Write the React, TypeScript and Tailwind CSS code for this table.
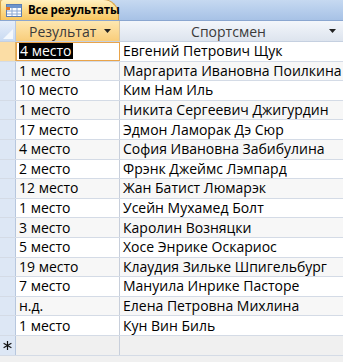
import React from "react";

const rows: [string, string][] = [
  ["4 место", "Евгений Петрович Щук"],
  ["1 место", "Маргарита Ивановна Поилкина"],
  ["10 место", "Ким Нам Иль"],
  ["1 место", "Никита Сергеевич Джигурдин"],
  ["17 место", "Эдмон Ламорак Дэ Сюр"],
  ["4 место", "София Ивановна Забибулина"],
  ["2 место", "Фрэнк Джеймс Лэмпард"],
  ["12 место", "Жан Батист Люмарэк"],
  ["1 место", "Усейн Мухамед Болт"],
  ["3 место", "Каролин Возняцки"],
  ["5 место", "Хосе Энрике Оскариос"],
  ["19 место", "Клаудия Зильке Шпигельбург"],
  ["7 место", "Мануила Инрике Пасторе"],
  ["н.д.", "Елена Петровна Михлина"],
  ["1 место", "Кун Вин Биль"],
];

function TableIcon() {
  return (
    <svg width="16" height="13" viewBox="0 0 16 13" className="shrink-0">
      <rect x="0.5" y="0.5" width="15" height="12" fill="#ffffff" stroke="#5b7fb5" />
      <rect x="1" y="1" width="14" height="3" fill="#6f95cc" />
      <line x1="1" y1="7" x2="15" y2="7" stroke="#8aa7d3" />
      <line x1="1" y1="10" x2="15" y2="10" stroke="#8aa7d3" />
      <line x1="6" y1="4" x2="6" y2="12" stroke="#8aa7d3" />
      <line x1="11" y1="4" x2="11" y2="12" stroke="#8aa7d3" />
      <rect x="0" y="3" width="4" height="3" fill="#e0782a" />
    </svg>
  );
}

function Arrow() {
  return (
    <svg width="7" height="4" viewBox="0 0 7 4" className="shrink-0">
      <path d="M0 0 H7 L3.5 4 Z" fill="#222" />
    </svg>
  );
}

function Star() {
  return (
    <svg width="9" height="9" viewBox="0 0 9 9">
      <g stroke="#111" strokeWidth="1.2">
        <line x1="4.5" y1="0" x2="4.5" y2="9" />
        <line x1="0.6" y1="2.25" x2="8.4" y2="6.75" />
        <line x1="0.6" y1="6.75" x2="8.4" y2="2.25" />
      </g>
    </svg>
  );
}

export default function App() {
  const font = { fontFamily: '"Open Sans", "Noto Sans", sans-serif' };
  return (
    <div className="w-[343px] h-[362px] overflow-hidden bg-[#f0f0f0] text-[14px] text-black" style={font}>
      {/* tab strip */}
      <div className="h-[21px] bg-gradient-to-b from-[#c6d9f1] to-[#a7c2e6] border-b border-[#8aa6d0] flex items-end">
        <div className="h-[21px] w-[119px] shrink-0 rounded-tl-[3px] rounded-tr-[16px] bg-gradient-to-b from-[#fff0c0] via-[#fcdc8c] to-[#f8c55e] border border-b-0 border-[#d9a44a] flex items-center pl-[5px] gap-[6px]">
          <TableIcon />
          <span className="font-bold text-[11.5px] leading-none whitespace-nowrap tracking-[-0.2px]">Все результаты</span>
        </div>
      </div>
      {/* header */}
      <div className="flex h-[21px] border-b border-[#c5d0e0]">
        <div className="w-[16px] bg-gradient-to-b from-[#e6eefa] to-[#c9daf2] border-r border-[#b7c7de] relative">
          <div className="absolute right-[2px] bottom-[2px] w-0 h-0 border-l-[10px] border-l-transparent border-b-[10px] border-b-[#f4f8fd]" />
        </div>
        <div className="w-[104px] bg-gradient-to-b from-[#fde7b0] to-[#f9cd7a] border-r border-[#d5c3a0] flex items-center pl-[13px] pr-[8px] justify-between">
          <span className="text-[#3a3a3a]">Результат</span>
          <Arrow />
        </div>
        <div className="flex-1 bg-gradient-to-b from-[#f3f6fb] to-[#dde4ee] flex items-center pr-[7px]">
          <span className="flex-1 text-center text-[#3a3a3a] pl-[8px]">Спортсмен</span>
          <Arrow />
        </div>
      </div>
      {/* rows */}
      {rows.map(([place, name], i) => (
        <div key={i} className={`flex h-[19.6px] border-b border-[#d4dbe6] ${i % 2 === 1 ? "bg-[#f7f7f7]" : "bg-white"}`}>
          <div className={`w-[16px] border-r ${i === 0 ? "bg-[#fbdda5] border-[#d9b26a]" : "bg-[#dde7f5] border-[#b7c7de]"}`} />
          <div className={`w-[104px] border-r flex items-center ${i === 0 ? "border border-[#e9a44a] pl-[2px]" : "border-[#c8cfdb] pl-[3px]"}`}>
            {i === 0 ? (
              <span className="bg-black text-white leading-[16px] px-[1px]">{place}</span>
            ) : (
              <span className="leading-[16px]">{place}</span>
            )}
          </div>
          <div className="flex-1 flex items-center pl-[3px]">
            <span className="leading-[16px] whitespace-nowrap">{name}</span>
          </div>
        </div>
      ))}
      {/* new row */}
      <div className="flex h-[20px] border-b border-[#d4dbe6] bg-[#f0f0f0]">
        <div className="w-[16px] bg-[#dde7f5] border-r border-[#b7c7de] flex items-center justify-center">
          <Star />
        </div>
        <div className="w-[104px] border-r border-[#c8cfdb]" />
        <div className="flex-1" />
      </div>
    </div>
  );
}
